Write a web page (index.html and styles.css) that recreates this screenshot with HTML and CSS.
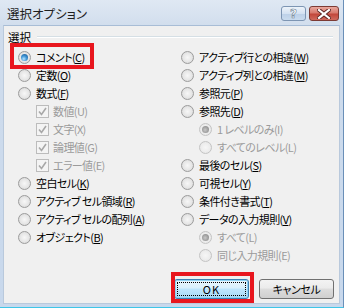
FILE: index.html
```html
<!DOCTYPE html>
<html lang="ja">
<head>
<meta charset="utf-8">
<link rel="stylesheet" href="styles.css">
</head>
<body>
<div class="window">
  <div class="titlebar">
    <span class="title">選択オプション</span>
    <div class="caption-buttons">
      <div class="cbtn help"><span>?</span></div>
      <div class="cbtn close">
        <svg width="14" height="10" viewBox="0 0 14 10"><path d="M2 1 L12 9 M12 1 L2 9" stroke="#5a2320" stroke-width="4" stroke-linecap="square"/><path d="M2 1 L12 9 M12 1 L2 9" stroke="#fff" stroke-width="2.2" stroke-linecap="square"/></svg>
      </div>
    </div>
  </div>
  <div class="client">
    <div class="group-head"><span class="group-label">選択</span><div class="rule"></div></div>
    <div class="cols">
      <div class="col col-left">
        <div class="row"><span class="radio checked"></span><span class="lbl">コメント(<u>C</u>)</span></div>
        <div class="row"><span class="radio"></span><span class="lbl">定数(<u>O</u>)</span></div>
        <div class="row"><span class="radio"></span><span class="lbl">数式(<u>F</u>)</span></div>
        <div class="row sub disabled"><span class="check"><svg width="11" height="11" viewBox="0 0 11 11"><path d="M2 5.5 L4.5 8.5 L9 2" fill="none" stroke="#a8a8a8" stroke-width="1.6"/></svg></span><span class="lbl">数値(U)</span></div>
        <div class="row sub disabled"><span class="check"><svg width="11" height="11" viewBox="0 0 11 11"><path d="M2 5.5 L4.5 8.5 L9 2" fill="none" stroke="#a8a8a8" stroke-width="1.6"/></svg></span><span class="lbl">文字(X)</span></div>
        <div class="row sub disabled"><span class="check"><svg width="11" height="11" viewBox="0 0 11 11"><path d="M2 5.5 L4.5 8.5 L9 2" fill="none" stroke="#a8a8a8" stroke-width="1.6"/></svg></span><span class="lbl">論理値(G)</span></div>
        <div class="row sub disabled"><span class="check"><svg width="11" height="11" viewBox="0 0 11 11"><path d="M2 5.5 L4.5 8.5 L9 2" fill="none" stroke="#a8a8a8" stroke-width="1.6"/></svg></span><span class="lbl">エラー値(E)</span></div>
        <div class="row"><span class="radio"></span><span class="lbl">空白セル(<u>K</u>)</span></div>
        <div class="row"><span class="radio"></span><span class="lbl">アクティブ セル領域(<u>R</u>)</span></div>
        <div class="row"><span class="radio"></span><span class="lbl">アクティブ セルの配列(<u>A</u>)</span></div>
        <div class="row"><span class="radio"></span><span class="lbl">オブジェクト(<u>B</u>)</span></div>
      </div>
      <div class="col col-right">
        <div class="row"><span class="radio"></span><span class="lbl">アクティブ行との相違(<u>W</u>)</span></div>
        <div class="row"><span class="radio"></span><span class="lbl">アクティブ列との相違(<u>M</u>)</span></div>
        <div class="row"><span class="radio"></span><span class="lbl">参照元(<u>P</u>)</span></div>
        <div class="row"><span class="radio"></span><span class="lbl">参照先(<u>D</u>)</span></div>
        <div class="row sub disabled"><span class="radio checked"></span><span class="lbl">1 レベルのみ(<u>I</u>)</span></div>
        <div class="row sub disabled"><span class="radio"></span><span class="lbl">すべてのレベル(<u>L</u>)</span></div>
        <div class="row"><span class="radio"></span><span class="lbl">最後のセル(<u>S</u>)</span></div>
        <div class="row"><span class="radio"></span><span class="lbl">可視セル(<u>Y</u>)</span></div>
        <div class="row"><span class="radio"></span><span class="lbl">条件付き書式(<u>T</u>)</span></div>
        <div class="row"><span class="radio"></span><span class="lbl">データの入力規則(<u>V</u>)</span></div>
        <div class="row sub disabled"><span class="radio checked"></span><span class="lbl">すべて(<u>L</u>)</span></div>
        <div class="row sub disabled"><span class="radio"></span><span class="lbl">同じ入力規則(<u>E</u>)</span></div>
      </div>
    </div>
    <div class="buttons">
      <div class="btn btn-default"><span class="focus">OK</span></div>
      <div class="btn">キャンセル</div>
    </div>
  </div>
  <div class="mark mark-comment"></div>
  <div class="mark mark-ok"></div>
</div>
</body>
</html>
```

FILE: styles.css
```css
html, body {
  margin: 0;
  padding: 0;
  background: #ffffff;
}
body {
  font-family: "Noto Sans CJK JP", "Noto Sans", sans-serif;
  font-feature-settings: "palt";
  font-size: 11px;
  color: #000;
}
.window {
  position: relative;
  width: 344px;
  height: 308px;
  box-sizing: border-box;
  background: linear-gradient(180deg, #dfe8f3 0, #cfdcec 30px, #c8d8ec 100%);
  border-right: 1px solid #6a8fb8;
  border-bottom: 1px solid #3fc6e8;
  display: flex;
  flex-direction: column;
}
.titlebar {
  height: 25px;
  display: flex;
  align-items: flex-start;
  justify-content: space-between;
  flex-shrink: 0;
}
.title {
  font-size: 12.5px;
  margin: 6px 0 0 7px;
  line-height: 16px;
  color: #1e1e1e;
}
.caption-buttons {
  display: flex;
  gap: 3px;
  margin: 6px 4px 0 0;
}
.cbtn {
  height: 15px;
  box-sizing: border-box;
  border-radius: 3px;
  display: flex;
  align-items: center;
  justify-content: center;
}
.help {
  width: 25px;
  border: 1px solid #7d95b3;
  background: linear-gradient(180deg, #edf3fa 0, #d4e2f2 50%, #bcd0e8 51%, #c9dbee 100%);
}
.help span {
  font-family: "DejaVu Sans", sans-serif;
  font-weight: bold;
  font-size: 12px;
  color: #fff;
  line-height: 12px;
  -webkit-text-stroke: 0.6px #6f7f93;
}
.close {
  width: 30px;
  border: 1px solid #7c3b35;
  background: linear-gradient(180deg, #e9a89e 0, #d77a6e 45%, #c2473b 55%, #cf6a5d 100%);
}
.client {
  flex: 1;
  margin: 0 3px 3px 3px;
  background: #f0f0f0;
  border: 1px solid #b9c9dc;
  border-top-color: #a8bdd6;
  position: relative;
  display: flex;
  flex-direction: column;
}
.group-head {
  display: flex;
  align-items: center;
  padding: 4px 6px 0 4px;
  height: 14px;
  margin-bottom: 4px;
  font-size: 11.5px;
}
.group-label {
  line-height: 14px;
}
.rule {
  flex: 1;
  margin-left: 6px;
  height: 0;
  border-top: 1px solid #d5dfe5;
  border-bottom: 1px solid #ffffff;
}
.cols {
  display: flex;
}
.col {
  display: flex;
  flex-direction: column;
}
.col-left {
  width: 163px;
  padding-left: 14px;
}
.row {
  height: 18px;
  display: flex;
  align-items: center;
  white-space: nowrap;
}
.row.sub {
  padding-left: 18px;
}
.lbl {
  line-height: 14px;
  letter-spacing: -0.6px;
}
.lbl u {
  text-decoration-thickness: 1px;
  text-underline-offset: 1px;
}
.disabled .lbl {
  color: #9b9b9b;
}
.disabled .lbl u {
  text-decoration: none;
}
.radio {
  width: 13px;
  height: 13px;
  box-sizing: border-box;
  border-radius: 50%;
  border: 1px solid #9c9c9c;
  background: radial-gradient(circle at 50% 50%, #f7f7f7 0, #e6e6e6 55%, #cfcfcf 100%);
  margin-right: 5px;
  flex-shrink: 0;
  display: flex;
  align-items: center;
  justify-content: center;
}
.radio.checked::after {
  content: "";
  width: 7px;
  height: 7px;
  border-radius: 50%;
  background: radial-gradient(circle at 40% 70%, #b5e4ff 0, #3d93d4 45%, #154e86 100%);
}
.disabled .radio {
  border-color: #c4c4c4;
  background: radial-gradient(circle at 50% 50%, #f6f6f6 0, #ececec 60%, #dcdcdc 100%);
}
.disabled .radio.checked::after {
  background: radial-gradient(circle at 45% 55%, #c8c8c8 0, #9b9b9b 60%, #8a8a8a 100%);
}
.check {
  width: 13px;
  height: 13px;
  box-sizing: border-box;
  border: 1px solid #bcbcbc;
  background: #f4f4f4;
  margin-right: 4px;
  flex-shrink: 0;
  display: flex;
  align-items: center;
  justify-content: center;
}
.check svg {
  display: block;
}
.buttons {
  display: flex;
  justify-content: flex-end;
  gap: 10px;
  padding-right: 5px;
  margin-top: 15px;
}
.btn {
  width: 75px;
  height: 20px;
  box-sizing: border-box;
  border: 1px solid #707070;
  border-radius: 3px;
  background: linear-gradient(180deg, #f3f3f3 0, #ebebeb 45%, #dddddd 50%, #cfcfcf 100%);
  display: flex;
  align-items: center;
  justify-content: center;
  line-height: 14px;
  letter-spacing: -0.4px;
}
.btn-default {
  border-color: #3c7fb1;
  background: linear-gradient(180deg, #eaf6fd 0, #d9f0fc 45%, #bee6fd 50%, #a7d9f5 100%);
  box-shadow: inset 0 0 0 1px #8fd2f3;
  padding: 2px;
}
.focus {
  flex: 1;
  align-self: stretch;
  display: flex;
  align-items: center;
  justify-content: center;
  border: 1px dotted #000;
  letter-spacing: 1px;
}
.mark {
  position: absolute;
  border: 4px solid #e8161e;
  box-sizing: border-box;
}
.mark-comment {
  left: 10px;
  top: 43px;
  width: 84px;
  height: 26px;
}
.mark-ok {
  left: 171px;
  top: 272px;
  width: 83px;
  height: 31px;
}
```
